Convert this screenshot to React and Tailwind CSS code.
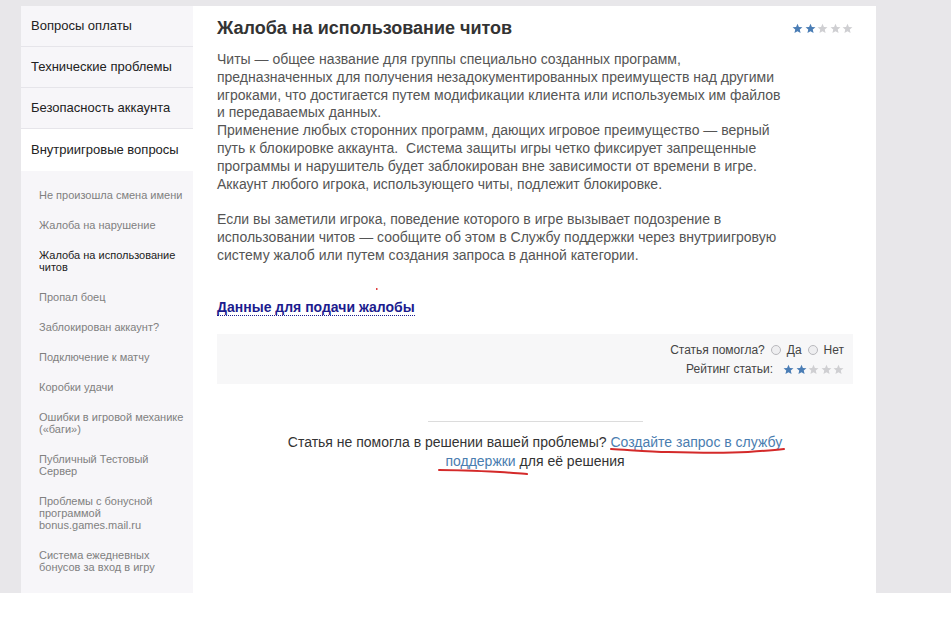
import React from "react";

const Star = ({ filled, size = 11 }) => (
  <svg width={size} height={size} viewBox="0 0 24 24" className="block">
    <polygon
      points="12,1.5 15.1,8.6 22.8,9.2 16.9,14.3 18.7,21.9 12,17.9 5.3,21.9 7.1,14.3 1.2,9.2 8.9,8.6"
      fill={filled ? "#4a7db5" : "#cfcfd2"}
    />
  </svg>
);

const Stars = ({ size, gap }) => (
  <div className={`flex ${gap}`}>
    {[0, 1, 2, 3, 4].map((i) => (
      <Star key={i} filled={i < 2} size={size} />
    ))}
  </div>
);

const Radio = () => (
  <span className="inline-block w-[10px] h-[10px] rounded-full border border-[#b9b9bd] bg-[#eeeef0] mx-[6px] align-[-1px]" />
);

const topItems = [
  { t: "Вопросы оплаты" },
  { t: "Технические проблемы" },
  { t: "Безопасность аккаунта" },
  { t: "Внутриигровые вопросы", active: true },
];

const subItems = [
  ["Не произошла смена имени"],
  ["Жалоба на нарушение"],
  ["Жалоба на использование", "читов"],
  ["Пропал боец"],
  ["Заблокирован аккаунт?"],
  ["Подключение к матчу"],
  ["Коробки удачи"],
  ["Ошибки в игровой механике", "(«баги»)"],
  ["Публичный Тестовый", "Сервер"],
  ["Проблемы с бонусной", "программой", "bonus.games.mail.ru"],
  ["Система ежедневных", "бонусов за вход в игру"],
  ["Рейтинг \"Почетный игрок\""],
];

const bodyLines1 = [
  "Читы — общее название для группы специально созданных программ,",
  "предназначенных для получения незадокументированных преимуществ над другими",
  "игроками, что достигается путем модификации клиента или используемых им файлов",
  "и передаваемых данных.",
  "Применение любых сторонних программ, дающих игровое преимущество — верный",
  "путь к блокировке аккаунта.  Система защиты игры четко фиксирует запрещенные",
  "программы и нарушитель будет заблокирован вне зависимости от времени в игре.",
  "Аккаунт любого игрока, использующего читы, подлежит блокировке.",
];
const bodyLines2 = [
  "Если вы заметили игрока, поведение которого в игре вызывает подозрение в",
  "использовании читов — сообщите об этом в Службу поддержки через внутриигровую",
  "систему жалоб или путем создания запроса в данной категории.",
];

export default function App() {
  return (
    <div className="relative w-[951px] h-[630px] bg-white overflow-hidden font-['Liberation_Sans',Arial,sans-serif]">
      <div className="h-[593px] bg-[#e8e7ea] pt-[6px] pl-[21px]">
        <div className="flex w-[855px] h-[587px] overflow-hidden">
          {/* Sidebar */}
          <aside className="w-[172px] shrink-0 bg-[#f7f6f9]">
            {topItems.map((it) => (
              <div
                key={it.t}
                className={`h-[41px] flex items-center pl-[10px] text-[13px] text-[#222] whitespace-nowrap ${
                  it.active ? "bg-white h-[42px]" : "border-b border-[#e6e5ea]"
                }`}
              >
                {it.t}
              </div>
            ))}
            <div className="pt-[9px]">
              {subItems.map((lines, i) => (
                <div
                  key={i}
                  className={`pl-[18px] py-[9px] text-[11px] leading-[12px] whitespace-nowrap ${
                    i === 2 ? "text-[#222]" : "text-[#808080]"
                  }`}
                >
                  {lines.map((l, j) => (
                    <div key={j}>{l}</div>
                  ))}
                </div>
              ))}
            </div>
          </aside>

          {/* Main */}
          <main className="flex-1 bg-white pl-[24px] pr-[23px] pt-[11px]">
            <div className="flex items-center justify-between">
              <h1 className="text-[18px] leading-[22px] font-bold text-[#333]">
                Жалоба на использование читов
              </h1>
              <Stars size={11} gap="gap-[1.5px]" />
            </div>

            <div className="mt-[12px] text-[14px] leading-[17.8px] text-[#555] whitespace-pre">
              {bodyLines1.map((l, i) => (
                <div key={i}>{l}</div>
              ))}
              <div className="h-[17.8px]" />
              {bodyLines2.map((l, i) => (
                <div key={i}>{l}</div>
              ))}
            </div>

            <div className="mt-[33px] leading-[18px]">
              <span className="text-[14px] font-bold text-[#1c1c8e] border-b border-dotted border-[#1c1c8e]">
                Данные для подачи жалобы
              </span>
            </div>

            <div className="mt-[18px] h-[50px] bg-[#f7f7f8] pt-[7px] pr-[9px] flex flex-col items-end text-[12px] leading-[19px] text-[#444]">
              <div className="flex items-center">
                Статья помогла?
                <Radio />
                Да
                <Radio />
                Нет
              </div>
              <div className="flex items-center">
                <span className="mr-[10px]">Рейтинг статьи:</span>
                <Stars size={11} gap="gap-[1.5px]" />
              </div>
            </div>

            <div className="mt-[37px] mx-auto w-[215px] h-px bg-[#dcdcdc]" />

            <div className="mt-[11px] text-center text-[14px] leading-[19px] text-[#333]">
              <div>
                Статья не помогла в решении вашей проблемы?{" "}
                <span className="text-[#4a7db0]">Создайте запрос в службу</span>
              </div>
              <div>
                <span className="text-[#4a7db0]">поддержки</span> для её решения
              </div>
            </div>
          </main>
        </div>
      </div>

      {/* red hand-drawn annotations */}
      <svg className="absolute left-0 top-0 pointer-events-none" width="951" height="630">
        <path
          d="M611 449 C 630 450, 650 452, 668 452 C 700 453, 730 453, 748 452 C 762 451, 775 450, 784 449"
          stroke="#d42a2a"
          strokeWidth="2"
          fill="none"
          strokeLinecap="round"
        />
        <path
          d="M439 470 C 460 470, 480 471, 500 472 C 512 473, 520 473, 527 474"
          stroke="#d42a2a"
          strokeWidth="2"
          fill="none"
          strokeLinecap="round"
        />
        <rect x="376" y="288" width="1.5" height="2" fill="#e04040" />
      </svg>
    </div>
  );
}
